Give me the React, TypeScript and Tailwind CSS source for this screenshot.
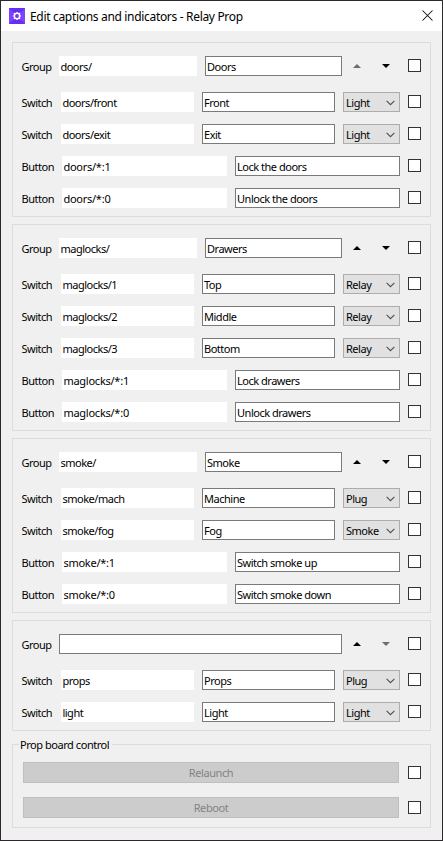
import React from "react";

type Item = { kind: "Switch" | "Button"; id: string; caption: string; type?: string };
type Section = { id: string | null; caption?: string; up: boolean; down: boolean; items: Item[] };

const sections: Section[] = [
  {
    id: "doors/", caption: "Doors", up: false, down: true,
    items: [
      { kind: "Switch", id: "doors/front", caption: "Front", type: "Light" },
      { kind: "Switch", id: "doors/exit", caption: "Exit", type: "Light" },
      { kind: "Button", id: "doors/*:1", caption: "Lock the doors" },
      { kind: "Button", id: "doors/*:0", caption: "Unlock the doors" },
    ],
  },
  {
    id: "maglocks/", caption: "Drawers", up: true, down: true,
    items: [
      { kind: "Switch", id: "maglocks/1", caption: "Top", type: "Relay" },
      { kind: "Switch", id: "maglocks/2", caption: "Middle", type: "Relay" },
      { kind: "Switch", id: "maglocks/3", caption: "Bottom", type: "Relay" },
      { kind: "Button", id: "maglocks/*:1", caption: "Lock drawers" },
      { kind: "Button", id: "maglocks/*:0", caption: "Unlock drawers" },
    ],
  },
  {
    id: "smoke/", caption: "Smoke", up: true, down: true,
    items: [
      { kind: "Switch", id: "smoke/mach", caption: "Machine", type: "Plug" },
      { kind: "Switch", id: "smoke/fog", caption: "Fog", type: "Smoke" },
      { kind: "Button", id: "smoke/*:1", caption: "Switch smoke up" },
      { kind: "Button", id: "smoke/*:0", caption: "Switch smoke down" },
    ],
  },
  {
    id: null, up: true, down: false,
    items: [
      { kind: "Switch", id: "props", caption: "Props", type: "Plug" },
      { kind: "Switch", id: "light", caption: "Light", type: "Light" },
    ],
  },
];

function Checkbox() {
  return <span className="mb-px block h-[13px] w-[13px] shrink-0 border border-[#333333] bg-white" />;
}

function Arrow({ up, enabled }: { up?: boolean; enabled: boolean }) {
  return (
    <svg width="8" height="4" viewBox="0 0 8 4" className={enabled ? "shrink-0 text-black" : "shrink-0 text-[#6d6d6d]"}>
      <path d={up ? "M4 0 L8 4 H0 Z" : "M0 0 H8 L4 4 Z"} fill="currentColor" />
    </svg>
  );
}

function Label({ children, width }: { children: string; width: string }) {
  return <span className={`${width} h-5 shrink-0 pt-px pl-[0.5px] leading-5`}>{children}</span>;
}

function ReadOnly({ children, width, spacing = "" }: { children: string; width: string; spacing?: string }) {
  return <div className={`${width} ${spacing} h-5 shrink-0 bg-white pt-px pl-[1.4px] leading-5`}>{children}</div>;
}

function Field({ children, width }: { children?: string; width: string }) {
  return <div className={`${width} h-5 shrink-0 border border-[#7a7a7a] bg-white pt-px pl-px leading-[18px]`}>{children}</div>;
}

function Select({ children }: { children: string }) {
  return (
    <div className="flex h-5 w-[57px] shrink-0 items-center justify-between border border-[#adadad] bg-[#e1e1e1] pr-1 pl-0.5 leading-[18px]">
      <span className="h-[18px] pt-px">{children}</span>
      <svg width="9" height="6" viewBox="0 0 9 6" fill="none" stroke="#505050" strokeWidth="1.1" className="mt-0.5">
        <path d="M0.6 0.8 L4.5 4.7 L8.4 0.8" />
      </svg>
    </div>
  );
}

function ItemRow({ item }: { item: Item }) {
  const isSwitch = item.kind === "Switch";
  return (
    <div className="flex h-5 items-center">
      <Label width={isSwitch ? "w-10" : "w-[41px]"}>{item.kind}</Label>
      <ReadOnly width={isSwitch ? "w-[133px]" : "w-[165px]"} spacing={isSwitch ? "" : "tracking-[-0.25px]"}>{item.id}</ReadOnly>
      <div className="mr-2 ml-2 flex gap-2">
        <Field width={isSwitch ? "w-[133px]" : "w-[165px]"}>{item.caption}</Field>
        {item.type && <Select>{item.type}</Select>}
      </div>
      <Checkbox />
    </div>
  );
}

function SectionBox({ section }: { section: Section }) {
  return (
    <section className="flex flex-col gap-3 border border-[#dcdcdc] pt-[13px] pb-2 pl-2">
      <div className="mb-1 flex h-5 items-center">
        <Label width="w-[38px]">Group</Label>
        {section.id === null ? (
          <Field width="w-[283px]" />
        ) : (
          <>
            <ReadOnly width="w-[138px]">{section.id}</ReadOnly>
            <div className="ml-2">
              <Field width="w-[137px]">{section.caption}</Field>
            </div>
          </>
        )}
        <div className="mr-[18px] ml-[11px] flex gap-[21px]">
          <Arrow up enabled={section.up} />
          <Arrow enabled={section.down} />
        </div>
        <Checkbox />
      </div>
      {section.items.map((item) => (
        <ItemRow key={item.id} item={item} />
      ))}
    </section>
  );
}

export default function App() {
  return (
    <div className="flex h-[841px] w-[443px] flex-col border border-[#2b292c] bg-[#f0f0f0] font-['Noto_Sans',sans-serif] text-[11px] tracking-[-0.48px] text-black">
      <header className="flex h-[30px] shrink-0 items-center bg-white pr-[9px] pl-2">
        <svg width="16" height="16" viewBox="0 0 16 16">
          <rect width="16" height="16" fill="#6a2cf5" />
          <path d="M0 0 L8 8 L0 16 Z M16 0 L8 8 L16 16 Z" fill="#7a45fa" />
          <circle cx="8" cy="8" r="2.7" fill="none" stroke="#fff" strokeWidth="1.4" />
          <path d="M8 4v1M8 11v1M4 8h1M11 8h1M5 5l.8.8M10.2 10.2l.8.8M11 5l-.8.8M5.8 10.2l-.8.8" stroke="#fff" strokeWidth="1.2" />
        </svg>
        <h1 className="ml-[5px] flex-1 pt-px text-[12px] leading-[30px] tracking-[-0.32px]">Edit captions and indicators - Relay Prop</h1>
        <svg width="11" height="11" viewBox="0 0 11 11" stroke="#111" strokeWidth="1.05" className="mb-0.5">
          <path d="M0.5 0.5 L10.5 10.5 M10.5 0.5 L0.5 10.5" />
        </svg>
      </header>
      <main className="flex flex-col gap-[7px] px-[11px] pt-[11px]">
        {sections.map((s, i) => (
          <SectionBox key={i} section={s} />
        ))}
        <section className="relative mt-[6px] flex h-[84px] flex-col gap-[14px] border border-[#dcdcdc] pt-[17px] pl-[10px]">
          <h2 className="absolute -top-[8px] left-[6px] w-[93px] bg-[#f0f0f0] pl-px leading-4 tracking-[-0.45px] whitespace-nowrap">Prop board control</h2>
          {["Relaunch", "Reboot"].map((name) => (
            <div key={name} className="flex h-[21px] items-center gap-[9px]">
              <button className="h-[21px] w-[376px] border border-[#bfbfbf] bg-[#cccccc] leading-[19px] tracking-[-0.4px] text-[#838383]">{name}</button>
              <span className="block h-[13px] w-[13px] border border-[#333333] bg-white" />
            </div>
          ))}
        </section>
      </main>
    </div>
  );
}
